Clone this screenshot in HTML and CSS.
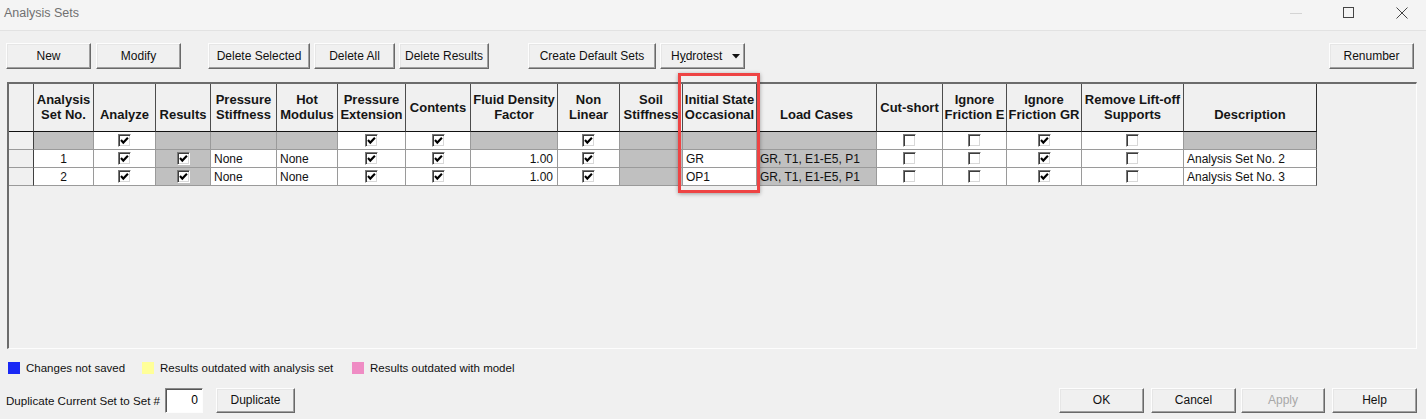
FILE: index.html
```html
<!DOCTYPE html>
<html>
<head>
<meta charset="utf-8">
<title>Analysis Sets</title>
<link rel="stylesheet" href="styles.css">
</head>
<body>
<div class="window">
  <div class="titlebar">
    <span class="title">Analysis Sets</span>
    <div class="winctl">
      <svg class="wc min" width="12" height="12" viewBox="0 0 12 12"><line x1="0" y1="6.5" x2="12" y2="6.5" stroke="#d4d4d4" stroke-width="1"/></svg>
      <svg class="wc" width="12" height="12" viewBox="0 0 12 12"><rect x="0.5" y="0.5" width="10" height="10" fill="none" stroke="#444" stroke-width="1"/></svg>
      <svg class="wc" width="12" height="12" viewBox="0 0 12 12"><path d="M0.5 0.5 L11.5 11.5 M11.5 0.5 L0.5 11.5" stroke="#444" stroke-width="1"/></svg>
    </div>
  </div>

  <div class="toolbar">
    <button class="btn w85">New</button>
    <button class="btn w85 ml5">Modify</button>
    <button class="btn w102 ml27">Delete Selected</button>
    <button class="btn w81 ml4">Delete All</button>
    <button class="btn w90 ml4">Delete Results</button>
    <button class="btn w128 ml39">Create Default Sets</button>
    <button class="btn w85 ml4 hydro"><span>H<u>y</u>drotest</span><svg width="8" height="5" viewBox="0 0 8 5"><path d="M0 0 H8 L4 4.5 Z" fill="#111"/></svg></button>
    <button class="btn w85 push">Renumber</button>
  </div>

  <div class="grid">
    <div class="sheet">
      <!-- header -->
      <div class="h"></div>
      <div class="h">Analysis<br>Set No.</div>
      <div class="h">&nbsp;<br>Analyze</div>
      <div class="h">&nbsp;<br>Results</div>
      <div class="h">Pressure<br>Stiffness</div>
      <div class="h">Hot<br>Modulus</div>
      <div class="h">Pressure<br>Extension</div>
      <div class="h">Contents</div>
      <div class="h">Fluid Density<br>Factor</div>
      <div class="h">Non<br>Linear</div>
      <div class="h">Soil<br>Stiffness</div>
      <div class="h">Initial State<br>Occasional</div>
      <div class="h">&nbsp;<br>Load Cases</div>
      <div class="h">Cut-short</div>
      <div class="h">Ignore<br>Friction E</div>
      <div class="h">Ignore<br>Friction GR</div>
      <div class="h">Remove Lift-off<br>Supports</div>
      <div class="h last">&nbsp;<br>Description</div>

      <!-- filter row -->
      <div class="rh"></div>
      <div class="d g"></div>
      <div class="d c"><span class="cb"><svg viewBox="0 0 11 11"><polyline points="2,5 4.3,7.6 8.9,2.8"/></svg></span></div>
      <div class="d g"></div>
      <div class="d g"></div>
      <div class="d g"></div>
      <div class="d c"><span class="cb"><svg viewBox="0 0 11 11"><polyline points="2,5 4.3,7.6 8.9,2.8"/></svg></span></div>
      <div class="d c"><span class="cb"><svg viewBox="0 0 11 11"><polyline points="2,5 4.3,7.6 8.9,2.8"/></svg></span></div>
      <div class="d g"></div>
      <div class="d c"><span class="cb"><svg viewBox="0 0 11 11"><polyline points="2,5 4.3,7.6 8.9,2.8"/></svg></span></div>
      <div class="d g"></div>
      <div class="d g"></div>
      <div class="d g"></div>
      <div class="d c"><span class="cb"></span></div>
      <div class="d c"><span class="cb"></span></div>
      <div class="d c"><span class="cb"><svg viewBox="0 0 11 11"><polyline points="2,5 4.3,7.6 8.9,2.8"/></svg></span></div>
      <div class="d c"><span class="cb"></span></div>
      <div class="d g last"></div>

      <!-- row 1 -->
      <div class="rh"></div>
      <div class="d c">1</div>
      <div class="d c"><span class="cb"><svg viewBox="0 0 11 11"><polyline points="2,5 4.3,7.6 8.9,2.8"/></svg></span></div>
      <div class="d c g"><span class="cb"><svg viewBox="0 0 11 11"><polyline points="2,5 4.3,7.6 8.9,2.8"/></svg></span></div>
      <div class="d l">None</div>
      <div class="d l">None</div>
      <div class="d c"><span class="cb"><svg viewBox="0 0 11 11"><polyline points="2,5 4.3,7.6 8.9,2.8"/></svg></span></div>
      <div class="d c"><span class="cb"><svg viewBox="0 0 11 11"><polyline points="2,5 4.3,7.6 8.9,2.8"/></svg></span></div>
      <div class="d r">1.00</div>
      <div class="d c"><span class="cb"><svg viewBox="0 0 11 11"><polyline points="2,5 4.3,7.6 8.9,2.8"/></svg></span></div>
      <div class="d g"></div>
      <div class="d l">GR</div>
      <div class="d l g">GR, T1, E1-E5, P1</div>
      <div class="d c"><span class="cb"></span></div>
      <div class="d c"><span class="cb"></span></div>
      <div class="d c"><span class="cb"><svg viewBox="0 0 11 11"><polyline points="2,5 4.3,7.6 8.9,2.8"/></svg></span></div>
      <div class="d c"><span class="cb"></span></div>
      <div class="d l last">Analysis Set No. 2</div>

      <!-- row 2 -->
      <div class="rh"></div>
      <div class="d c">2</div>
      <div class="d c"><span class="cb"><svg viewBox="0 0 11 11"><polyline points="2,5 4.3,7.6 8.9,2.8"/></svg></span></div>
      <div class="d c g"><span class="cb"><svg viewBox="0 0 11 11"><polyline points="2,5 4.3,7.6 8.9,2.8"/></svg></span></div>
      <div class="d l">None</div>
      <div class="d l">None</div>
      <div class="d c"><span class="cb"><svg viewBox="0 0 11 11"><polyline points="2,5 4.3,7.6 8.9,2.8"/></svg></span></div>
      <div class="d c"><span class="cb"><svg viewBox="0 0 11 11"><polyline points="2,5 4.3,7.6 8.9,2.8"/></svg></span></div>
      <div class="d r">1.00</div>
      <div class="d c"><span class="cb"><svg viewBox="0 0 11 11"><polyline points="2,5 4.3,7.6 8.9,2.8"/></svg></span></div>
      <div class="d g"></div>
      <div class="d l">OP1</div>
      <div class="d l g">GR, T1, E1-E5, P1</div>
      <div class="d c"><span class="cb"></span></div>
      <div class="d c"><span class="cb"></span></div>
      <div class="d c"><span class="cb"><svg viewBox="0 0 11 11"><polyline points="2,5 4.3,7.6 8.9,2.8"/></svg></span></div>
      <div class="d c"><span class="cb"></span></div>
      <div class="d l last">Analysis Set No. 3</div>
    </div>
    <div class="highlight"></div>
  </div>

  <div class="legend">
    <div class="li w134"><span class="sw blue"></span>Changes not saved</div>
    <div class="li w210"><span class="sw yellow"></span>Results outdated with analysis set</div>
    <div class="li"><span class="sw pink"></span>Results outdated with model</div>
  </div>

  <div class="bottom">
    <span class="duplabel">Duplicate Current Set to Set #</span>
    <span class="num">0</span>
    <button class="btn w79 ml13 h25">Duplicate</button>
    <div class="actions">
      <button class="btn w85 h25">OK</button>
      <button class="btn w85 h25 ml7">Cancel</button>
      <button class="btn w84 h25 ml5 disabled">Apply</button>
      <button class="btn w85 h25 ml7">Help</button>
    </div>
  </div>
</div>
</body>
</html>
```

FILE: styles.css
```css
html, body {
  margin: 0;
  padding: 0;
}
body {
  width: 1426px;
  height: 419px;
  overflow: hidden;
  background: #f0f0f0;
  font-family: "Liberation Sans", Arial, sans-serif;
  font-size: 12px;
  color: #000;
}
.window {
  display: flex;
  flex-direction: column;
  height: 419px;
}

/* title bar */
.titlebar {
  box-sizing: content-box;
  height: 24px;
  border-bottom: 1px solid #e2e2e2;
  background: #f4f4f4;
  display: flex;
  align-items: flex-start;
  padding: 6px 0 0 4px;
}
.title {
  font-size: 12.5px;
  line-height: 15px;
  color: #707070;
}
.winctl {
  margin-left: auto;
  margin-top: 1px;
  display: flex;
  gap: 41px;
  padding-right: 18px;
}
.wc { display: block; }

/* buttons */
.btn {
  box-sizing: border-box;
  height: 26px;
  padding: 0;
  margin: 0;
  font-family: "Liberation Sans", Arial, sans-serif;
  font-size: 12px;
  color: #111;
  background: #f0f0f0;
  border: 1px solid;
  border-color: #fdfdfd #696969 #696969 #fdfdfd;
  box-shadow: inset -1px -1px 0 #a0a0a0, inset 1px 1px 0 #e6e6e6;
  display: inline-flex;
  align-items: center;
  justify-content: center;
}
.btn.disabled { color: #a8a8a8; }
.h25 { height: 25px; }
.w79 { width: 79px; }
.w81 { width: 81px; }
.w84 { width: 84px; }
.w85 { width: 85px; }
.w90 { width: 90px; }
.w102 { width: 102px; }
.w128 { width: 128px; }
.ml4 { margin-left: 4px; }
.ml5 { margin-left: 5px; }
.ml7 { margin-left: 7px; }
.ml13 { margin-left: 13px; }
.ml27 { margin-left: 27px; }
.ml39 { margin-left: 39px; }
.push { margin-left: auto; }

.toolbar {
  display: flex;
  margin-top: 12px;
  padding: 0 12px 0 6px;
  height: 26px;
}
.hydro { justify-content: flex-start; padding-left: 10px; }
.hydro u { text-decoration: underline; }
.hydro svg { margin-left: 10px; margin-top: 1px; }

/* grid */
.grid {
  position: relative;
  margin: 13px 0 0 7px;
  width: 1410px;
  height: 267px;
  box-sizing: border-box;
  border-top: 2px solid #6c6c6c;
  border-left: 2px solid #6c6c6c;
  border-right: 1px solid #fdfdfd;
  border-bottom: 1px solid #fdfdfd;
  background: #f0f0f0;
}
.sheet {
  display: grid;
  grid-template-columns: 25px 60px 62px 55px 66px 61px 68px 65px 87px 62px 63px 74px 120px 66px 64px 75px 102px 133px;
  grid-template-rows: 48px 18px 18px 18px;
  width: 1308px;
}
.h {
  box-sizing: border-box;
  border-right: 1px solid #4c4c4c;
  border-bottom: 1px solid #111;
  background: #f0f0f0;
  display: flex;
  align-items: center;
  justify-content: center;
  text-align: center;
  font-weight: bold;
  font-size: 13px;
  line-height: 15px;
  color: #151515;
  white-space: nowrap;
  padding-bottom: 1px;
}
.h.last { border-right-color: #303030; }
.rh {
  box-sizing: border-box;
  background: #f0f0f0;
  border-right: 1px solid #404040;
  border-bottom: 1px solid #9a9a9a;
}
.d {
  box-sizing: border-box;
  background: #fff;
  border-right: 1px solid #9a9a9a;
  border-bottom: 1px solid #9a9a9a;
  display: flex;
  align-items: center;
  font-size: 12px;
  line-height: 14px;
  white-space: nowrap;
  overflow: hidden;
  color: #111;
}
.d.last { border-right-color: #555; }
.d.g { background: #c0c0c0; }
.d.c { justify-content: center; }
.d.l { justify-content: flex-start; padding-left: 3px; }
.d.r { justify-content: flex-end; padding-right: 4px; }

.cb {
  box-sizing: border-box;
  display: inline-block;
  width: 13px;
  height: 13px;
  background: #fff;
  border: 1px solid;
  border-color: #7a7a7a #ffffff #ffffff #7a7a7a;
  box-shadow: inset 1px 1px 0 #3c3c3c, inset -1px -1px 0 #d8d8d8;
  margin-top: -1px;
}
.cb svg {
  display: block;
  width: 11px;
  height: 11px;
}
.cb polyline {
  fill: none;
  stroke: #000;
  stroke-width: 2.1;
}

.highlight {
  position: absolute;
  left: 669px;
  top: -11px;
  width: 82px;
  height: 120px;
  box-sizing: border-box;
  border: 3px solid #ee4444;
  box-shadow: 0 1px 4px rgba(0, 0, 0, 0.35);
}

/* legend */
.legend {
  display: flex;
  align-items: center;
  margin-top: 12px;
  padding-left: 8px;
  height: 13px;
  font-size: 11.5px;
  color: #111;
}
.li { display: flex; align-items: center; white-space: nowrap; }
.w134 { width: 134px; }
.w210 { width: 210px; }
.sw {
  display: inline-block;
  width: 12px;
  height: 12px;
  margin-right: 6px;
}
.sw.blue { background: #1928f5; }
.sw.yellow { background: #ffff99; }
.sw.pink { background: #ef8cc4; }

/* bottom row */
.bottom {
  display: flex;
  align-items: center;
  margin-top: 13px;
  padding: 0 9px 0 6px;
  height: 26px;
}
.duplabel {
  width: 159px;
  font-size: 11.6px;
  white-space: nowrap;
  color: #111;
}
.num {
  box-sizing: border-box;
  width: 38px;
  height: 25px;
  background: #fff;
  border: 1px solid;
  border-color: #8a8a8a #fdfdfd #fdfdfd #8a8a8a;
  box-shadow: inset 1px 1px 0 #555;
  display: flex;
  align-items: center;
  justify-content: flex-end;
  padding-right: 4px;
  font-size: 12px;
}
.actions {
  margin-left: auto;
  display: flex;
}
```
